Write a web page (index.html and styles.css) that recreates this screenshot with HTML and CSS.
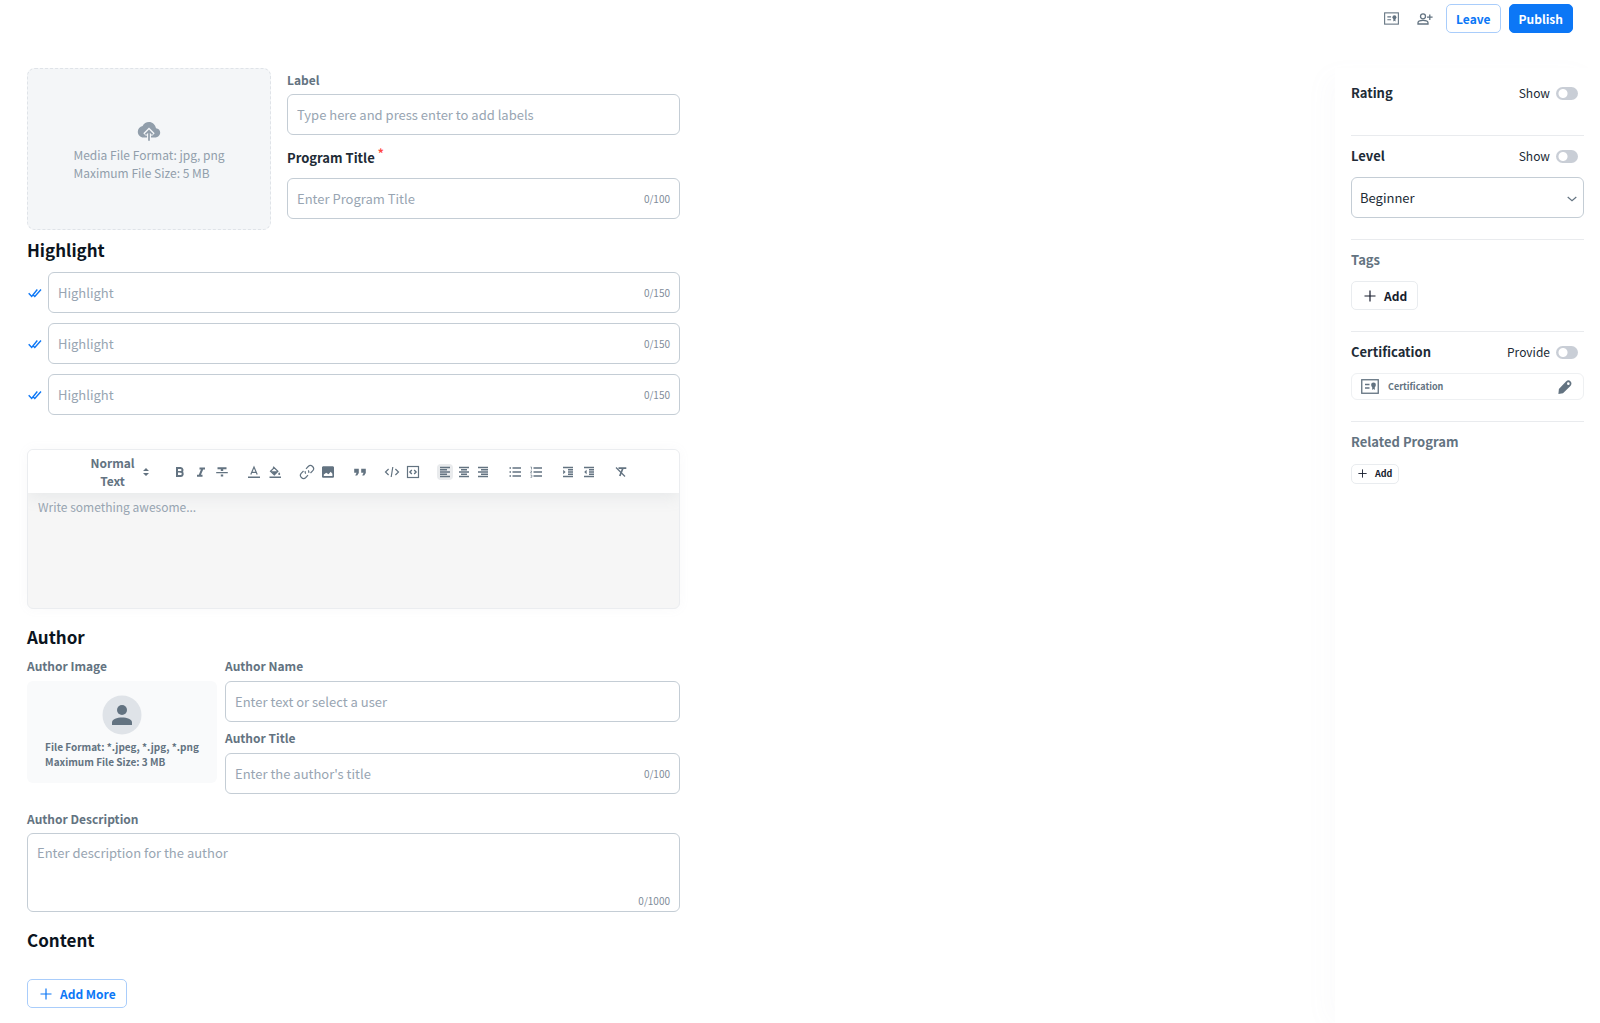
FILE: index.html
```html
<!DOCTYPE html>
<html lang="en">
<head>
  <meta charset="UTF-8">
  <meta name="viewport" content="width=device-width, initial-scale=1.0">
  <title>Program</title>
  <link rel="stylesheet" href="styles.css">
</head>
<body>
<svg class="sprite" aria-hidden="true">
  <symbol id="cert" viewBox="0 0 18 15"><rect x=".75" y=".75" width="16.5" height="13.5" fill="none" stroke="currentColor" stroke-width="1.3"/><path d="M4 5.5h4.500M4 9h4.500" stroke="currentColor" stroke-width="1.3"/><circle cx="12.500" cy="6" r="2.400"/><path d="M11.200 7.500h2.600v3.500l-1.300-.9-1.300.9z"/></symbol>
  <symbol id="plus" viewBox="0 0 12 12"><path d="M6 .5v11M.5 6h11" stroke="currentColor" stroke-width="1.2" fill="none"/></symbol>
  <symbol id="checks" viewBox="0 0 14 10"><path d="M.7 5.200l3 3.300 5.600-7M5.500 7.200l1.300 1.300 6.200-7" fill="none" stroke="currentColor" stroke-width="1.400"/></symbol>
</svg>
<header class="topbar">
  <button class="icon-btn" aria-label="Certificate"><svg width="15" height="13"><use href="#cert"/></svg></button>
  <button class="icon-btn" aria-label="Add user"><svg width="16" height="12" viewBox="0 0 16 12" fill="none" stroke="currentColor" stroke-width="1.3"><circle cx="6" cy="3.300" r="2.500"/><path d="M1 11V9.800C1 8.200 3.500 7.400 6 7.400s5 .8 5 2.400V11zM12.800 1.500v5.500M10 4.200h5.600"/></svg></button>
  <button class="btn btn-outline">Leave</button>
  <button class="btn btn-primary">Publish</button>
</header>
<div class="page">
  <main class="main">
    <form class="form">
      <section class="intro">
        <button type="button" class="upload">
          <svg width="24" height="20" viewBox="0 0 24 20"><path d="M19 7.200C18.300 3.700 15.400 1 12 1 9.200 1 6.800 2.600 5.600 5 2.800 5.500.8 7.900.8 10.800.8 14 3.300 16.600 6.500 16.600H18c2.900 0 5.200-2.200 5.200-5 0-2.500-1.800-4.300-4.200-4.400z"/><path d="M12 20v-9.500M7.700 13.600L12 9.300l4.300 4.300" fill="none" stroke="#f4f6f8" stroke-width="4"/><path d="M12 19.800v-9M8.400 13.300L12 9.700l3.600 3.600" fill="none" stroke="currentColor" stroke-width="1.700"/></svg>
          <span>Media File Format: jpg, png<br>Maximum File Size: 5 MB</span>
        </button>
        <div class="intro-fields">
          <label class="label" for="label">Label</label>
          <div class="field"><input id="label" type="text" placeholder="Type here and press enter to add labels"></div>
          <label class="label label-lg" for="title">Program Title<sup>*</sup></label>
          <div class="field"><input id="title" type="text" placeholder="Enter Program Title"><span class="count">0/100</span></div>
        </div>
      </section>

      <h2>Highlight</h2>
      <div class="highlights">
        <div class="highlight">
          <svg width="14" height="10"><use href="#checks"/></svg>
          <div class="field"><input type="text" aria-label="Highlight 1" placeholder="Highlight"><span class="count">0/150</span></div>
        </div>
        <div class="highlight">
          <svg width="14" height="10"><use href="#checks"/></svg>
          <div class="field"><input type="text" aria-label="Highlight 2" placeholder="Highlight"><span class="count">0/150</span></div>
        </div>
        <div class="highlight">
          <svg width="14" height="10"><use href="#checks"/></svg>
          <div class="field"><input type="text" aria-label="Highlight 3" placeholder="Highlight"><span class="count">0/150</span></div>
        </div>
      </div>

      <div class="editor">
        <div class="toolbar">
          <button type="button" class="style-pick"><span>Normal Text</span><svg width="6" height="8" viewBox="0 0 6 8"><path d="M3 0l3 3H0zM3 8l3-3H0z"/></svg></button>
          <div class="tools">
            <button type="button" aria-label="Bold"><svg viewBox="0 0 16 16"><path d="M5 4h3.600a2 2 0 0 1 .8 3.800A2.200 2.200 0 0 1 8.900 12H5z" fill="none" stroke="currentColor" stroke-width="2"/><path d="M5 7.800h4" stroke="currentColor" stroke-width="1.500"/></svg></button>
            <button type="button" aria-label="Italic"><svg viewBox="0 0 16 16" fill="none" stroke="currentColor" stroke-width="2"><path d="M6.500 4.500h5.500M4 11.700h5.500M9.500 4.500l-3 7.200"/></svg></button>
            <button type="button" aria-label="Strike"><svg viewBox="0 0 16 16"><path d="M3.500 3.200h9v2H9.200v1.800H6.800V5.200H3.500zM2.200 8h11.600v1.200H2.200zM6.800 10.400h2.400v2.200H6.800z"/></svg></button>
          </div>
          <div class="tools">
            <button type="button" aria-label="Text color"><svg viewBox="0 0 16 16" fill="none" stroke="currentColor"><path d="M4.800 10.500L8 3l3.200 7.500M5.800 8.300h4.400" stroke-width="1.200"/><path d="M2 13.200h12" stroke-width="1.400"/></svg></button>
            <button type="button" aria-label="Fill color"><svg viewBox="0 0 16 16"><path d="M6.200 2.800l4.700 4.400-3.600 3.600L3.500 7.200 7 4z" fill="none" stroke="currentColor" stroke-width="1.200"/><path d="M4 7.200h6.500l-3.200 3.300zM12.200 8.200c.7 1 1 1.400 1 1.800a1 1 0 0 1-2 0c0-.4.400-.9 1-1.800zM2.500 12.500h11.500v1.400H2.500z"/></svg></button>
          </div>
          <div class="tools">
            <button type="button" aria-label="Link"><svg viewBox="0 0 16 16" fill="none" stroke="currentColor" stroke-width="1.200"><path d="M7 4.800l2.200-2.300a3.100 3.100 0 0 1 4.400 4.400L11.500 9M9 11.200l-2.200 2.300a3.100 3.100 0 0 1-4.400-4.400L4.500 7M6.700 9.600a3.100 3.100 0 0 1-.4-2.500M9.300 6.400a3.100 3.100 0 0 1 .4 2.500"/></svg></button>
            <button type="button" aria-label="Image"><svg viewBox="0 0 16 16"><path fill-rule="evenodd" d="M3.500 2.200h9c.9 0 1.500.6 1.500 1.400v8.800c0 .8-.6 1.400-1.500 1.400h-9c-.9 0-1.500-.6-1.500-1.400V3.600c0-.8.6-1.400 1.500-1.400zM3.800 12h8.600V9.800l-1.700-2-2.200 2.400L6.200 8.700 3.800 10.500z"/></svg></button>
          </div>
          <div class="tools">
            <button type="button" aria-label="Quote"><svg viewBox="0 0 16 16"><path d="M2.200 4.700h4.600v4.200L5.200 11.600H3.200l1.400-2.800H2.200zM9.200 4.700h4.600v4.200l-1.600 2.700h-2l1.400-2.800H9.200z"/></svg></button>
          </div>
          <div class="tools">
            <button type="button" aria-label="Inline code"><svg viewBox="0 0 16 16" fill="none" stroke="currentColor" stroke-width="1.200"><path d="M4.600 5L1.500 8l3.100 3M11.400 5l3.100 3-3.100 3M8.800 3L7.200 13"/></svg></button>
            <button type="button" aria-label="Code block"><svg viewBox="0 0 16 16" fill="none" stroke="currentColor" stroke-width="1.200"><rect x="2.500" y="2.500" width="11" height="11"/><path d="M6.800 6L4.900 8l1.900 2M9.200 6l1.900 2-1.900 2" stroke-width="1.400"/></svg></button>
          </div>
          <div class="tools tools-tight">
            <button type="button" class="active" aria-label="Align left"><svg viewBox="0 0 16 16"><path d="M3 3.500h10M3 5.750h7M3 8h10M3 10.250h7M3 12.500h10" stroke="currentColor" stroke-width="1.300"/></svg></button>
            <button type="button" aria-label="Align center"><svg viewBox="0 0 16 16"><path d="M3 3.500h10M5 5.750h6M3 8h10M5 10.250h6M3 12.500h10" stroke="currentColor" stroke-width="1.300"/></svg></button>
            <button type="button" aria-label="Align right"><svg viewBox="0 0 16 16"><path d="M3 3.500h10M6 5.750h7M3 8h10M6 10.250h7M3 12.500h10" stroke="currentColor" stroke-width="1.300"/></svg></button>
          </div>
          <div class="tools">
            <button type="button" aria-label="Bullet list"><svg viewBox="0 0 16 16"><path d="M5.500 4h8.500M5.500 8h8.500M5.500 12h8.500M2.500 4h1.500M2.500 8h1.500M2.500 12h1.500" stroke="currentColor" stroke-width="1.300"/></svg></button>
            <button type="button" aria-label="Numbered list"><svg viewBox="0 0 16 16"><path d="M5.500 4h8.500M5.500 8h8.500M5.500 12h8.500" stroke="currentColor" stroke-width="1.300"/><path d="M2.500 3H3.500v2.500M2.500 7h1.300L2.500 9h1.500M2.500 11h1.300v2.300H2.500" fill="none" stroke="currentColor" stroke-width=".7"/></svg></button>
          </div>
          <div class="tools">
            <button type="button" aria-label="Indent"><svg viewBox="0 0 16 16"><path d="M3 3.500h10M8 5.750h5M8 8h5M8 10.250h5M3 12.500h10" stroke="currentColor" stroke-width="1.300"/><path d="M3.200 5.800L5.600 8l-2.400 2.200z"/></svg></button>
            <button type="button" aria-label="Outdent"><svg viewBox="0 0 16 16"><path d="M3 3.500h10M8 5.750h5M8 8h5M8 10.250h5M3 12.500h10" stroke="currentColor" stroke-width="1.300"/><path d="M5.600 5.800L3.200 8l2.400 2.200z"/></svg></button>
          </div>
          <div class="tools">
            <button type="button" aria-label="Clear format"><svg viewBox="0 0 16 16" fill="none" stroke="currentColor"><path d="M5.500 4.200h7.800" stroke-width="1.800"/><path d="M9.800 4.500L6.800 12" stroke-width="1.700"/><path d="M3 3.500l9 9" stroke-width="1.200"/></svg></button>
          </div>
        </div>
        <textarea class="editor-body" aria-label="Program description" placeholder="Write something awesome..."></textarea>
      </div>

      <h2>Author</h2>
      <section class="author">
        <div class="author-image">
          <span class="label">Author Image</span>
          <button type="button" class="avatar-upload">
            <svg width="40" height="40" viewBox="0 0 40 40"><circle cx="20" cy="20" r="19.500" fill="#dfe3e8"/><circle cx="20" cy="15" r="5"/><path d="M10 30v-2.500C10 24.300 15 22.500 20 22.500s10 1.800 10 5V30z"/></svg>
            <span>File Format: *.jpeg, *.jpg, *.png<br>Maximum File Size: 3 MB</span>
          </button>
        </div>
        <div class="author-fields">
          <label class="label" for="author-name">Author Name</label>
          <div class="field"><input id="author-name" type="text" placeholder="Enter text or select a user"></div>
          <label class="label" for="author-title">Author Title</label>
          <div class="field"><input id="author-title" type="text" placeholder="Enter the author's title"><span class="count">0/100</span></div>
        </div>
      </section>
      <label class="label" for="author-desc">Author Description</label>
      <div class="field field-area"><textarea id="author-desc" placeholder="Enter description for the author"></textarea><span class="count">0/1000</span></div>

      <h2>Content</h2>
      <button type="button" class="btn btn-outline btn-more"><svg width="12" height="12"><use href="#plus"/></svg>Add More</button>
    </form>
  </main>

  <aside class="side">
    <section class="side-rating">
      <div class="side-head"><h3>Rating</h3><label class="switch">Show<input type="checkbox"></label></div>
    </section>
    <section>
      <div class="side-head"><h3>Level</h3><label class="switch">Show<input type="checkbox"></label></div>
      <div class="select">
        <select aria-label="Level"><option>Beginner</option></select>
        <svg width="10" height="6" viewBox="0 0 10 6"><path d="M.7 1L5 4.600 9.300 1" fill="none" stroke="currentColor" stroke-width="1.200"/></svg>
      </div>
    </section>
    <section>
      <div class="side-head muted"><h3>Tags</h3></div>
      <button class="btn btn-plain"><svg width="12" height="12"><use href="#plus"/></svg>Add</button>
    </section>
    <section>
      <div class="side-head"><h3>Certification</h3><label class="switch">Provide<input type="checkbox"></label></div>
      <div class="cert-card">
        <svg width="18" height="15"><use href="#cert"/></svg>
        <span>Certification</span>
        <button aria-label="Edit certification"><svg width="14" height="14" viewBox="0 0 14 14"><path fill-rule="evenodd" d="M8 1.600C9.400.2 11-.1 12.400 1.200s1.400 3.200 0 4.700L5 13.200.4 13.900.9 9zM10.300 2.300a1.300 1.300 0 1 0 .1 2.600 1.300 1.300 0 0 0-.1-2.600z"/></svg></button>
      </div>
    </section>
    <section>
      <div class="side-head muted"><h3>Related Program</h3></div>
      <button class="btn btn-plain btn-small"><svg width="9" height="9"><use href="#plus"/></svg>Add</button>
    </section>
  </aside>
</div>
</body>
</html>
```
FILE: styles.css
```css
*{box-sizing: border-box;margin: 0;padding: 0;}
body{min-height: 100vh;display: flex;flex-direction: column;background: #fff;color: #212b36;font: 13px/20px "Noto Sans CJK SC", "Source Sans Pro", sans-serif;}
button, input, select, textarea{font: inherit;color: inherit;border: 0;background: none;outline: none;}
button{cursor: pointer;}
svg{display: block;flex: none;}
svg:not([fill]){fill: currentColor;}
.sprite{position: absolute;width: 0;height: 0;}

.topbar{height: 68px;padding: 4px 27px 0 0;display: flex;justify-content: flex-end;align-items: flex-start;gap: 8px;}
.icon-btn{width: 26px;height: 29px;display: flex;align-items: center;justify-content: center;color: #637381;}
.btn{height: 29px;padding: 0 9px;display: inline-flex;align-items: center;gap: 8px;border: 1px solid #dfe3e8;border-radius: 5px;font-size: 12px;font-weight: bold;line-height: 18px;}
.btn-outline{color: #0c77f6;border-color: #a9cdfb;}
.btn-primary{color: #fff;background: #0c77f6;border-color: #0c77f6;}
.btn-more, .btn-plain{padding: 0 10px 0 12px;}
.btn-plain{color: #161c2d;border-color: #e9ecef;}
.btn-small{height: 20px;padding: 0 6px;font-size: 9px;}

.page{flex: 1;display: flex;}
.main{flex: 1;padding-left: 27px;display: grid;grid-template-columns: 1fr 1fr;gap: 2px;}
h2{font-size: 17px;line-height: 24px;color: #0b1420;}
.label{display: block;font-size: 12px;font-weight: bold;line-height: 20px;color: #637381;}
.label-lg{font-size: 13px;color: #212b36;}
.label sup{margin-left: 3px;font-size: 12px;line-height: 0;color: #ff4842;}
.field{height: 41px;padding: 0 9px;display: flex;align-items: center;border: 1px solid #c4cdd5;border-radius: 6px;}
.field input{flex: 1;min-width: 0;height: 100%;}
::placeholder{color: #98a5b2;opacity: 1;}
.count{font-size: 10px;color: #7f8d9b;}

.intro{display: flex;gap: 16px;margin-bottom: 6px;}
.upload{width: 244px;height: 162px;padding-top: 4px;display: flex;flex-direction: column;align-items: center;justify-content: center;gap: 5px;border: 1px dashed #dfe3e8;border-radius: 8px;background: #f4f6f8;color: #919eab;font-size: 12px;line-height: 18px;text-align: left;}
.intro-fields{flex: 1;padding-top: 2px;}
.intro-fields .field{margin: 4px 0 13px;}
.intro-fields .label-lg{margin-bottom: 10px;}
.highlights{display: grid;gap: 10px;margin: 10px 0 34px;}
.highlight{display: flex;align-items: center;gap: 6px;padding-left: 1px;color: #0c77f6;}
.highlight .field{flex: 1;color: #212b36;}

.editor{height: 160px;margin-bottom: 16px;display: flex;flex-direction: column;overflow: hidden;border: 1px solid #ebedf0;border-radius: 6px;background: #f6f6f6;box-shadow: 0 0 12px rgba(145, 158, 171, 0.06);}
.toolbar{position: relative;height: 43px;display: flex;align-items: center;justify-content: center;gap: 16px;background: #fff;color: #637381;box-shadow: 0 4px 16px rgba(145, 158, 171, 0.15);}
.style-pick{width: 78px;display: flex;align-items: center;font-size: 12px;font-weight: bold;line-height: 18px;}
.style-pick span{flex: 1;padding-left: 4px;}
.style-pick svg{margin-right: 7px;}
.tools{display: flex;gap: 5px;}
.tools button{width: 16px;height: 16px;border-radius: 4px;}
.tools-tight{gap: 3px;}
.tools .active{background: #e9ebed;}
.editor-body{flex: 1;padding: 5px 10px;resize: none;font-size: 12px;line-height: 18px;}

.author{display: flex;gap: 8px;margin: 7px 0 15px;}
.author .label{margin-bottom: 5px;}
.author-image{width: 190px;}
.avatar-upload{width: 100%;height: 102px;display: flex;flex-direction: column;align-items: center;justify-content: center;gap: 4px;border-radius: 6px;background: #f9fafb;color: #637381;font-size: 10px;font-weight: bold;line-height: 15px;text-align: left;}
.author-fields{flex: 1;}
.author-fields .field + .label{margin-top: 6px;}
.field-area{height: 79px;margin: 4px 0 16px;align-items: flex-end;}
.field-area textarea{flex: 1;height: 100%;padding-top: 9px;resize: none;}
.form > .btn-more{margin-top: 27px;}

.side{width: 265px;padding: 0 16px;box-shadow: -12px 4px 24px -4px rgba(145, 158, 171, 0.04);}
.side section{padding: 10px 0 21px;border-bottom: 1px solid #e9ebee;}
.side section:last-child{border: 0;}
.side .side-rating{padding: 15px 0 32px;}
.side-head{height: 20px;margin-bottom: 11px;padding-right: 6px;display: flex;align-items: center;justify-content: space-between;}
.side .side-rating .side-head{margin: 0;}
h3{font-size: 13px;line-height: 20px;}
.muted{color: #637381;}
.switch{display: flex;align-items: center;gap: 6px;font-size: 12px;}
.switch input{appearance: none;width: 22px;height: 13px;border-radius: 7px;background: radial-gradient(circle at 7px 50%, #fff 4px, #c9ced6 5px);}
.select{position: relative;}
.select select{appearance: none;width: 100%;height: 41px;padding: 0 8px;border: 1px solid #c4cdd5;border-radius: 6px;}
.select svg{position: absolute;right: 7px;top: 19px;color: #637381;pointer-events: none;}
.cert-card{height: 27px;padding: 0 11px 0 9px;display: flex;align-items: center;gap: 9px;border: 1px solid #eef0f2;border-radius: 6px;color: #637381;font-size: 9px;font-weight: bold;}
.cert-card button{margin-left: auto;}
```
